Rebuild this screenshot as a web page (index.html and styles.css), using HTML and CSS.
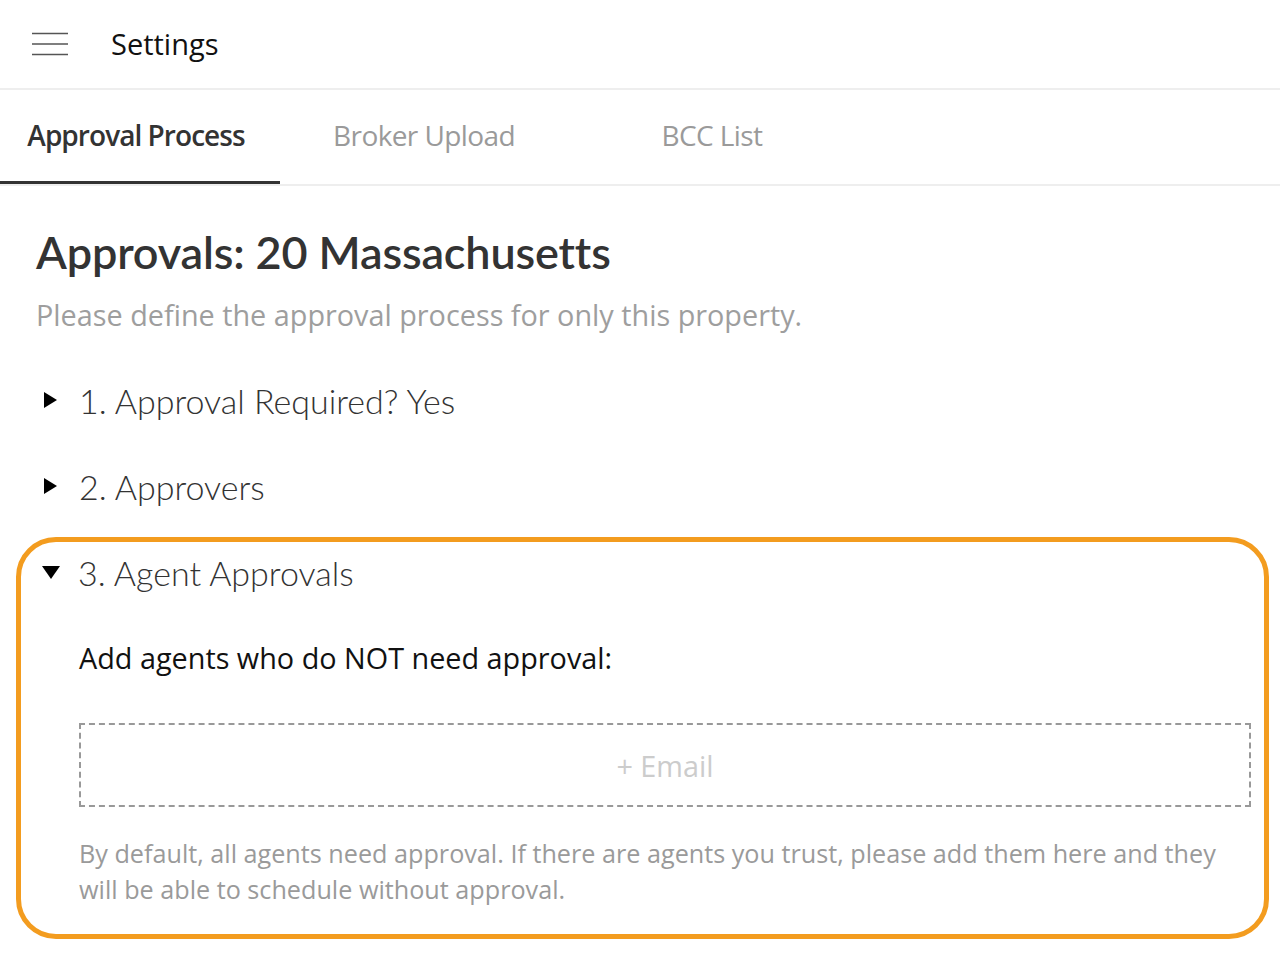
FILE: index.html
```html
<!DOCTYPE html>
<html lang="en">
<head>
<meta charset="utf-8">
<title>Settings</title>
<link rel="stylesheet" href="styles.css">
</head>
<body>
<header class="topbar">
  <button class="menu-btn" aria-label="Menu">
    <svg width="36" height="24" viewBox="0 0 36 24"><path d="M0 1.5H36M0 12H36M0 22.5H36" stroke="#555" stroke-width="1.6" fill="none"/></svg>
  </button>
  <h1 class="topbar-title">Settings</h1>
</header>
<nav class="tabs">
  <a class="tab active">Approval Process</a>
  <a class="tab">Broker Upload</a>
  <a class="tab">BCC List</a>
</nav>
<main class="content">
  <h2 class="page-title">Approvals: 20 Massachusetts</h2>
  <p class="page-sub">Please define the approval process for only this property.</p>
  <div class="sections">
    <section class="section">
      <div class="section-head"><span class="caret caret-right"></span><span>1. Approval Required? Yes</span></div>
    </section>
    <section class="section">
      <div class="section-head"><span class="caret caret-right"></span><span>2. Approvers</span></div>
    </section>
    <section class="section highlighted">
      <div class="section-head"><span class="caret caret-down"></span><span>3. Agent Approvals</span></div>
      <div class="section-body">
        <p class="body-label">Add agents who do NOT need approval:</p>
        <div class="email-drop">+ Email</div>
        <p class="body-note">By default, all agents need approval. If there are agents you trust, please add them here and they will be able to schedule without approval.</p>
      </div>
    </section>
  </div>
</main>
</body>
</html>
```
FILE: styles.css
```css
* { box-sizing: border-box; }
html, body { margin: 0; padding: 0; background: #fff; }
body { font-family: "Open Sans", "Liberation Sans", sans-serif; color: #111; }

.topbar {
  height: 90px;
  display: flex;
  align-items: center;
  border-bottom: 2px solid #eeeeee;
  padding-left: 32px;
}
.menu-btn {
  border: 0; background: none; padding: 0; margin: 0;
  width: 36px; height: 24px;
  display: flex;
}
.topbar-title {
  margin: 0 0 0 43px;
  font-size: 29px;
  font-weight: 400;
  color: #111;
  line-height: 1;
  position: relative; top: -1px;
}

.tabs {
  display: flex;
  border-bottom: 2px solid #eeeeee;
  height: 96px;
}
.tab {
  display: flex;
  align-items: center;
  justify-content: center;
  font-size: 28px;
  color: #9a9a9a;
  letter-spacing: -0.6px;
  height: 94px;
  padding-bottom: 4px;
  width: 288px;
}
.tab:nth-child(1) { width: 280px; padding-right: 8px; }
.tab.active {
  color: #333;
  font-weight: 600;
  letter-spacing: -0.95px;
  border-bottom: 3px solid #333;
  padding-bottom: 1px;
}

.content { padding: 0; }
.page-title {
  margin: 39px 0 0 36px;
  font-family: "Lato", "Open Sans", sans-serif;
  font-weight: 600;
  font-size: 45px;
  line-height: 54px;
  color: #333;
  letter-spacing: -0.15px;
}
.page-sub {
  margin: 16px 0 0 36px;
  font-size: 28.8px;
  line-height: 40px;
  color: #9e9e9e;
}

.sections {
  margin: 30px 11px 0 16px;
  display: flex;
  flex-direction: column;
  gap: 16px;
}
.section {
  border: 5px solid transparent;
  border-radius: 40px;
}
.section.highlighted { border-color: #f39c1f; }
.section-head {
  height: 60px;
  display: flex;
  align-items: center;
  padding-left: 23px;
  font-family: "Lato", "Open Sans", sans-serif;
  font-weight: 300;
  font-size: 34px;
  color: #333;
  gap: 22px;
}
.caret { width: 0; height: 0; flex: none; }
.caret-right {
  border-top: 8px solid transparent;
  border-bottom: 8px solid transparent;
  border-left: 13px solid #000;
}
.caret-down {
  border-left: 9px solid transparent;
  border-right: 9px solid transparent;
  border-top: 13px solid #000;
  margin-left: -2px;
  margin-right: -4px;
}

.section-body { padding: 36px 13px 27px 58px; }
.body-label {
  margin: 0;
  font-size: 28.8px;
  line-height: 40px;
  color: #111;
}
.email-drop {
  margin-top: 45px;
  height: 84px;
  border: 2px dashed #999;
  display: flex;
  align-items: center;
  justify-content: center;
  font-size: 28.8px;
  color: #cccccc;
}
.body-note {
  margin: 28px 0 0;
  font-size: 25.2px;
  line-height: 36px;
  color: #9a9a9a;
}
```
